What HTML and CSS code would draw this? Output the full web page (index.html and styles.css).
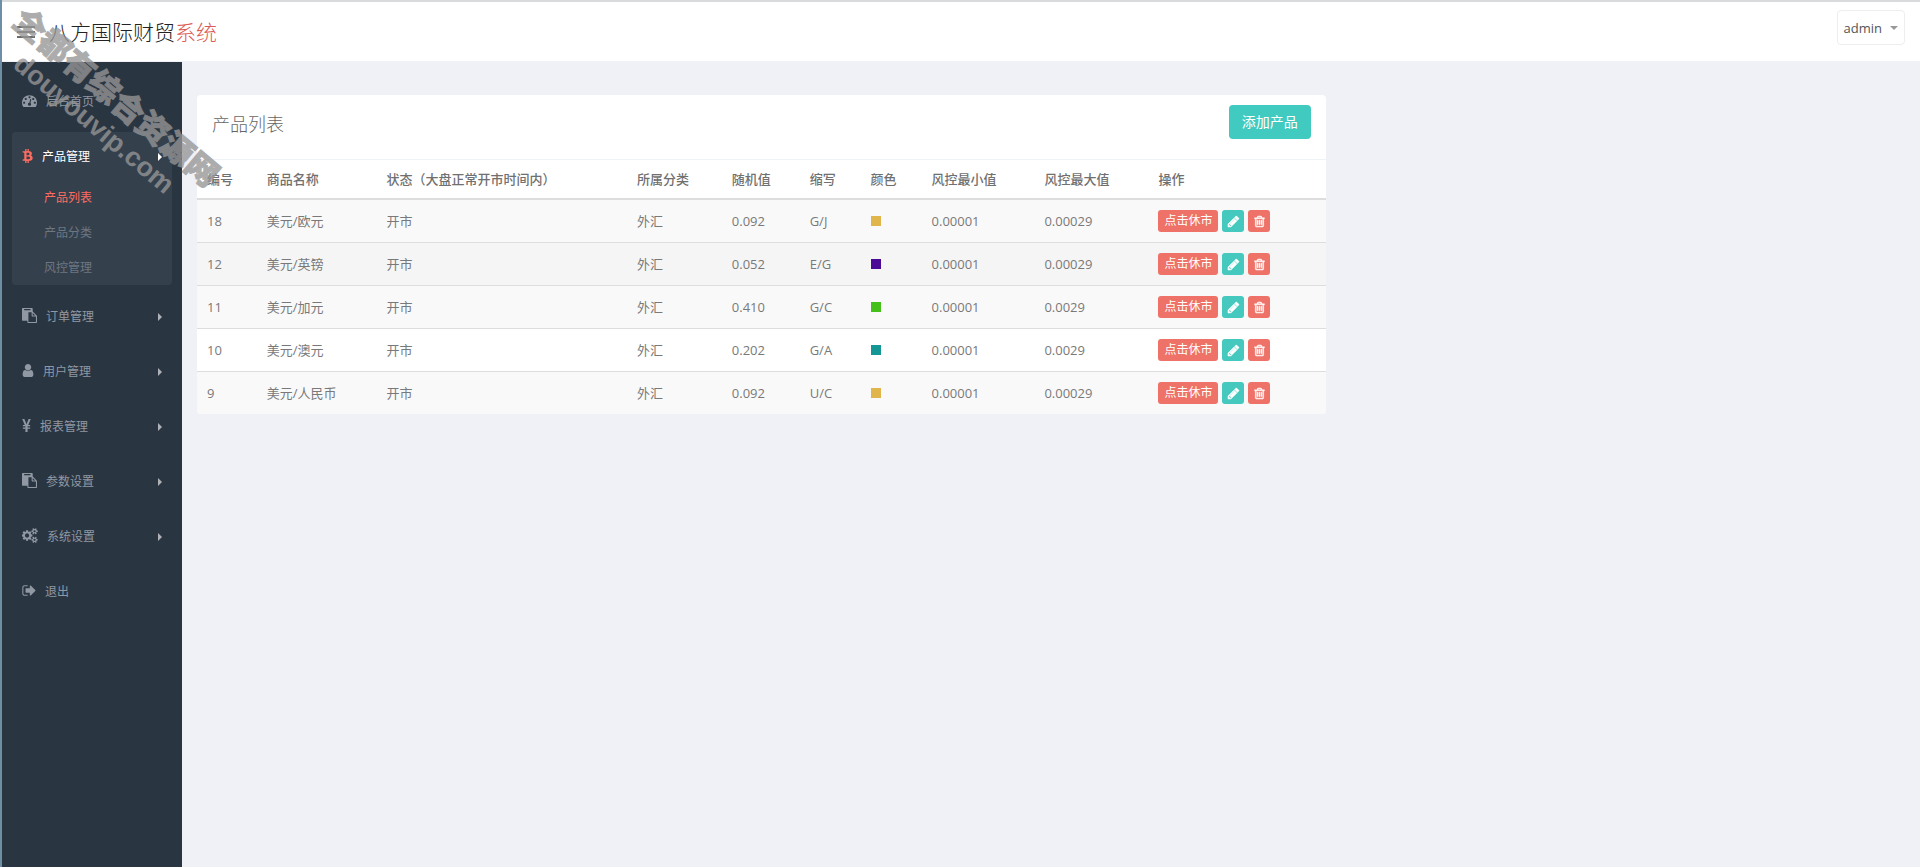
FILE: index.html
```html
<!DOCTYPE html>
<html lang="zh-CN">
<head>
<meta charset="utf-8">
<title>八方国际财贸系统</title>
<link rel="stylesheet" href="styles.css">
</head>
<body>
<svg class="sprite" aria-hidden="true">
  <symbol id="i-dash" viewBox="0 0 1792 1792"><path d="M384 1152q0-53-37.500-90.500t-90.500-37.500-90.500 37.500-37.500 90.500 37.500 90.500 90.500 37.500 90.500-37.500 37.500-90.500zm192-448q0-53-37.500-90.500t-90.500-37.500-90.500 37.500-37.500 90.500 37.500 90.500 90.500 37.500 90.500-37.500 37.500-90.500zm428 481l101-382q6-26-7.500-48.500t-38.500-29.500-48 6.500-30 39.500l-101 382q-60 5-107 43.500t-63 98.500q-20 77 20 146t117 89 146-20 89-117q16-60-6-117t-72-91zm660-33q0-53-37.500-90.500t-90.500-37.500-90.500 37.500-37.500 90.500 37.500 90.500 90.500 37.500 90.500-37.500 37.500-90.500zm-640-640q0-53-37.500-90.500t-90.500-37.500-90.500 37.500-37.500 90.500 37.500 90.500 90.500 37.500 90.500-37.500 37.500-90.500zm448 192q0-53-37.500-90.500t-90.500-37.500-90.500 37.500-37.500 90.500 37.500 90.500 90.500 37.500 90.500-37.500 37.500-90.500zm320 448q0 261-141 483-19 29-54 29h-1402q-35 0-54-29-141-221-141-483 0-182 71-348t191-286 286-191 348-71 348 71 286 191 191 286 71 348z"/></symbol>
  <symbol id="i-btc" viewBox="0 0 1280 1792"><path d="M1167 640q18 182-131 258 117 28 175 103t45 214q-7 71-32.500 125t-64.500 89-97 58.500-121.500 34.500-145.500 15v255h-154v-251q-80 0-122-1v252h-154v-255q-18 0-54-.5t-55-.5h-200l31-183h111q50 0 58-51v-402h16q-6-1-16-1v-287q-13-68-89-68h-111v-164l212 1q64 0 97-1v-252h154v247q82-2 122-2v-245h154v252q79 7 140 22.500t113 45 82.500 78 36.500 114.500zm-215 545q0-36-15-64t-37-46-57.500-30.500-65.500-18.500-74-9-69-3-64.500 1-47.500 1v338q8 0 37 .5t48 .5 53-1.500 58.500-4 57-8.500 55.500-14 47.500-21 39.500-30 24.500-40 9.500-51zm-71-476q0-33-12.500-58.500t-30.500-42-48-28-55-16.500-61.500-8-58-2.500-54 1-39.500.5v307q5 0 34.500.5t46.500 0 50-2 55-5.500 51.500-11 48.500-18.500 37-27 27-38.500 9-51z"/></symbol>
  <symbol id="i-paste" viewBox="0 0 1792 1792"><path d="M768 1664h896v-640h-416q-40 0-68-28t-28-68v-416h-384v1152zm256-1440v-64q0-13-9.500-22.500t-22.500-9.500h-704q-13 0-22.500 9.500t-9.500 22.500v64q0 13 9.500 22.500t22.500 9.500h704q13 0 22.500-9.500t9.500-22.500zm256 672h299l-299-299v299zm512 128v672q0 40-28 68t-68 28h-960q-40 0-68-28t-28-68v-160h-544q-40 0-68-28t-28-68v-1344q0-40 28-68t68-28h1088q40 0 68 28t28 68v328q21 13 36 28l408 408q28 28 48 76t20 88z"/></symbol>
  <symbol id="i-user" viewBox="256 0 1280 1792"><path d="M1536 1399q0 109-62.500 187t-150.500 78h-854q-88 0-150.500-78t-62.500-187q0-85 8.500-160.500t31.500-152 58.500-131 94-89 134.500-34.500q131 128 313 128t313-128q76 0 134.500 34.500t94 89 58.500 131 31.500 152 8.500 160.500zm-256-887q0 159-112.500 271.500t-271.500 112.500-271.500-112.500-112.500-271.500 112.500-271.500 271.500-112.500 271.500 112.500 112.500 271.500z"/></symbol>
  <symbol id="i-yen" viewBox="0 0 8 14"><path d="M0 1h2l2 4.800L6 1h2L5.600 6.500H7.400v1.200H5v1.100h2.400V10H5v3H3v-3H.6V8.800H3V7.700H.6V6.500h1.800z"/></symbol>
  <symbol id="i-cogs" viewBox="0 0 1856 1792"><path d="M832 896q0-106-75-181t-181-75-181 75-75 181 75 181 181 75 181-75 75-181zm768 512q0-52-38-90t-90-38-90 38-38 90q0 53 37.500 90.500t90.500 37.500 90.500-37.500 37.500-90.500zm0-1024q0-52-38-90t-90-38-90 38-38 90q0 53 37.500 90.500t90.500 37.500 90.500-37.500 37.500-90.500zm-384 421v185q0 10-7 19.500t-16 10.500l-155 24q-11 35-32 76 34 48 90 115 7 11 7 20 0 12-7 19-23 30-82.500 89.500t-78.500 59.500q-11 0-21-7l-115-90q-37 19-77 31-11 108-23 155-7 24-30 24h-186q-11 0-20-7.500t-10-17.500l-23-153q-34-10-75-31l-118 89q-7 7-20 7-11 0-21-8-144-133-144-160 0-9 7-19 10-14 41-53t47-61q-23-44-35-82l-152-24q-10-1-17-9.500t-7-19.500v-185q0-10 7-19.500t16-10.500l155-24q11-35 32-76-34-48-90-115-7-11-7-20 0-12 7-20 22-30 82-89t79-59q11 0 21 7l115 90q34-18 77-32 11-108 23-154 7-24 30-24h186q11 0 20 7.500t10 17.500l23 153q34 10 75 31l118-89q8-7 20-7 11 0 21 8 144 133 144 160 0 8-7 19-12 16-42 54t-45 60q23 48 34 82l152 23q10 2 17 10.500t7 19.500zm640 533v140q0 16-149 31-12 27-30 52 51 113 51 138 0 4-4 7-122 71-124 71-8 0-46-47t-52-68q-20 2-30 2t-30-2q-14 21-52 68t-46 47q-2 0-124-71-4-3-4-7 0-25 51-138-18-25-30-52-149-15-149-31v-140q0-16 149-31 13-29 30-52-51-113-51-138 0-4 4-7 4-2 35-20t59-34 30-16q8 0 46 46.500t52 67.500q20-2 30-2t30 2q51-71 92-112l6-2q4 0 124 70 4 3 4 7 0 25-51 138 17 23 30 52 149 15 149 31zm0-1024v140q0 16-149 31-12 27-30 52 51 113 51 138 0 4-4 7-122 71-124 71-8 0-46-47t-52-68q-20 2-30 2t-30-2q-14 21-52 68t-46 47q-2 0-124-71-4-3-4-7 0-25 51-138-18-25-30-52-149-15-149-31v-140q0-16 149-31 13-29 30-52-51-113-51-138 0-4 4-7 4-2 35-20t59-34 30-16q8 0 46 46.500t52 67.500q20-2 30-2t30 2q51-71 92-112l6-2q4 0 124 70 4 3 4 7 0 25-51 138 17 23 30 52 149 15 149 31z"/></symbol>
  <symbol id="i-out" viewBox="64 0 1600 1792"><path d="M704 1440q0 4 1 20t.5 26.500-3 23.500-10 19.500-20.500 6.500h-320q-119 0-203.500-84.500t-84.500-203.500v-704q0-119 84.500-203.500t203.500-84.500h320q13 0 22.500 9.500t9.500 22.500q0 4 1 20t.5 26.500-3 23.500-10 19.500-20.500 6.500h-320q-66 0-113 47t-47 113v704q0 66 47 113t113 47h312l11.500 1 11.500 3 8 5.500 7 9 2 13.500zm928-544q0 26-19 45l-544 544q-19 19-45 19t-45-19-19-45v-288h-448q-26 0-45-19t-19-45v-384q0-26 19-45t45-19h448v-288q0-26 19-45t45-19 45 19l544 544q19 19 19 45z"/></symbol>
  <symbol id="i-pencil" viewBox="0 0 1792 1792"><path d="M491 1536l91-91-235-235-91 91v107h128v128h107zm523-928q0-22-22-22-10 0-17 7l-542 542q-7 7-7 17 0 22 22 22 10 0 17-7l542-542q7-7 7-17zm-54-192l416 416-832 832h-416v-416zm683 96q0 53-37 90l-166 166-416-416 166-165q36-38 90-38 53 0 91 38l235 234q37 39 37 91z"/></symbol>
  <symbol id="i-trash" viewBox="0 0 1792 1792"><path d="M704 736v576q0 14-9 23t-23 9h-64q-14 0-23-9t-9-23v-576q0-14 9-23t23-9h64q14 0 23 9t9 23zm256 0v576q0 14-9 23t-23 9h-64q-14 0-23-9t-9-23v-576q0-14 9-23t23-9h64q14 0 23 9t9 23zm256 0v576q0 14-9 23t-23 9h-64q-14 0-23-9t-9-23v-576q0-14 9-23t23-9h64q14 0 23 9t9 23zm128 724v-948h-896v948q0 22 7 40.500t14.500 27 10.500 8.500h832q3 0 10.500-8.500t14.500-27 7-40.500zm-672-1076h448l-48-117q-7-9-17-11h-317q-10 2-17 11zm928 32v64q0 14-9 23t-23 9h-96v948q0 83-47 143.500t-113 60.500h-832q-66 0-113-58.500t-47-141.500v-952h-96q-14 0-23-9t-9-23v-64q0-14 9-23t23-9h309l70-167q15-37 54-63t79-26h320q40 0 79 26t54 63l70 167h309q14 0 23 9t9 23z"/></symbol>
</svg>

<header class="topbar">
  <button class="toggle" type="button" aria-label="菜单"><span></span><span></span><span></span></button>
  <a class="logo" href="#">八方国际财贸<span>系统</span></a>
  <button class="account" type="button">admin<i class="caret"></i></button>
</header>

<div class="layout">
  <nav class="sidebar">
    <ul class="menu">
      <li><a href="#"><svg class="w15"><use href="#i-dash"/></svg>后台首页</a></li>
      <li class="active">
        <a href="#"><svg class="w11"><use href="#i-btc"/></svg>产品管理<i class="arrow"></i></a>
        <ul class="submenu">
          <li><a class="current" href="#">产品列表</a></li>
          <li><a href="#">产品分类</a></li>
          <li><a href="#">风控管理</a></li>
        </ul>
      </li>
      <li><a href="#"><svg class="w15"><use href="#i-paste"/></svg>订单管理<i class="arrow"></i></a></li>
      <li><a href="#"><svg class="w12"><use href="#i-user"/></svg>用户管理<i class="arrow"></i></a></li>
      <li><a href="#"><svg class="w9"><use href="#i-yen"/></svg>报表管理<i class="arrow"></i></a></li>
      <li><a href="#"><svg class="w15"><use href="#i-paste"/></svg>参数设置<i class="arrow"></i></a></li>
      <li><a href="#"><svg class="w16"><use href="#i-cogs"/></svg>系统设置<i class="arrow"></i></a></li>
      <li><a href="#"><svg class="w14"><use href="#i-out"/></svg>退出</a></li>
    </ul>
  </nav>

  <main class="content">
    <section class="panel">
      <div class="panel-head">
        <h1>产品列表</h1>
        <button class="btn-add" type="button">添加产品</button>
      </div>
      <table class="grid">
        <colgroup><col class="c-id"><col class="c-name"><col class="c-state"><col class="c-type"><col class="c-rand"><col class="c-abbr"><col class="c-color"><col class="c-min"><col class="c-max"><col></colgroup>
        <thead>
          <tr><th>编号</th><th>商品名称</th><th>状态<span class="paren">（</span>大盘正常开市时间内<span class="paren">）</span></th><th>所属分类</th><th>随机值</th><th>缩写</th><th>颜色</th><th>风控最小值</th><th>风控最大值</th><th>操作</th></tr>
        </thead>
        <tbody>
          <tr><td>18</td><td>美元/欧元</td><td>开市</td><td>外汇</td><td>0.092</td><td>G/J</td><td><i class="swatch gold"></i></td><td>0.00001</td><td>0.00029</td><td><div class="ops"><button class="op red" type="button">点击休市</button><button class="op icon teal" type="button" aria-label="编辑"><svg><use href="#i-pencil"/></svg></button><button class="op icon red" type="button" aria-label="删除"><svg><use href="#i-trash"/></svg></button></div></td></tr>
          <tr class="hovered"><td>12</td><td>美元/英镑</td><td>开市</td><td>外汇</td><td>0.052</td><td>E/G</td><td><i class="swatch purple"></i></td><td>0.00001</td><td>0.00029</td><td><div class="ops"><button class="op red" type="button">点击休市</button><button class="op icon teal" type="button" aria-label="编辑"><svg><use href="#i-pencil"/></svg></button><button class="op icon red" type="button" aria-label="删除"><svg><use href="#i-trash"/></svg></button></div></td></tr>
          <tr><td>11</td><td>美元/加元</td><td>开市</td><td>外汇</td><td>0.410</td><td>G/C</td><td><i class="swatch green"></i></td><td>0.00001</td><td>0.0029</td><td><div class="ops"><button class="op red" type="button">点击休市</button><button class="op icon teal" type="button" aria-label="编辑"><svg><use href="#i-pencil"/></svg></button><button class="op icon red" type="button" aria-label="删除"><svg><use href="#i-trash"/></svg></button></div></td></tr>
          <tr><td>10</td><td>美元/澳元</td><td>开市</td><td>外汇</td><td>0.202</td><td>G/A</td><td><i class="swatch cyan"></i></td><td>0.00001</td><td>0.0029</td><td><div class="ops"><button class="op red" type="button">点击休市</button><button class="op icon teal" type="button" aria-label="编辑"><svg><use href="#i-pencil"/></svg></button><button class="op icon red" type="button" aria-label="删除"><svg><use href="#i-trash"/></svg></button></div></td></tr>
          <tr><td>9</td><td>美元/人民币</td><td>开市</td><td>外汇</td><td>0.092</td><td>U/C</td><td><i class="swatch gold"></i></td><td>0.00001</td><td>0.00029</td><td><div class="ops"><button class="op red" type="button">点击休市</button><button class="op icon teal" type="button" aria-label="编辑"><svg><use href="#i-pencil"/></svg></button><button class="op icon red" type="button" aria-label="删除"><svg><use href="#i-trash"/></svg></button></div></td></tr>
        </tbody>
      </table>
    </section>
  </main>
</div>

<div class="watermark"><span class="wm-name">全都有综合资源网</span><span class="wm-site">douyouvip.com</span></div>
</body>
</html>
```
FILE: styles.css
```css
* { box-sizing: border-box; }

body {
  display: flex;
  flex-direction: column;
  min-height: 100vh;
  margin: 0;
  border-left: 2px solid #6d8ea4;
  background: #f0f1f7;
  color: #797979;
  font: 13px/20px "Open Sans", "Noto Sans CJK SC", sans-serif;
}

ul { margin: 0; padding: 0; list-style: none; }
a { color: inherit; text-decoration: none; }
button { font: inherit; cursor: pointer; }
svg { display: block; fill: currentColor; }
.sprite { position: absolute; width: 0; height: 0; }

.topbar {
  display: flex;
  align-items: center;
  height: 62px;
  padding: 0 15px;
  border-top: 2px solid #d8dadc;
  border-bottom: 1px solid #f1f2f7;
  background: #fff;
}
.toggle {
  display: flex;
  flex-direction: column;
  gap: 3px;
  width: 18px;
  padding: 0;
  border: 0;
  background: none;
}
.toggle span { height: 2px; background: #6b6b6b; }
.logo {
  margin-left: 14px;
  color: #222;
  font-size: 21px;
  font-weight: 300;
  line-height: 30px;
}
.logo span { color: #dc5a54; }
.account {
  display: flex;
  align-items: center;
  gap: 8px;
  height: 35px;
  margin: 0 0 8px auto;
  padding: 0 6px;
  border: 1px solid #eee;
  border-radius: 4px;
  background: #fff;
  color: #555;
}
.caret {
  border: 4px solid transparent;
  border-top-color: #999;
  border-bottom: 0;
}

.layout { display: flex; flex: 1; }

.sidebar {
  flex: none;
  width: 180px;
  padding: 15px 10px;
  background: #2a3542;
  color: #8f98a3;
  font-size: 12px;
}
.menu { display: flex; flex-direction: column; gap: 7px; }
.menu > li > a {
  display: flex;
  align-items: center;
  height: 48px;
  padding: 2px 10px 0;
}
.menu svg { height: 15px; margin: 0 9px 3px 0; }
.w9 { width: 9px; }
.w11 { width: 11px; }
.w12 { width: 12px; }
.w14 { width: 14px; }
.w15 { width: 15px; }
.w16 { width: 16px; }
.arrow {
  margin-left: auto;
  border: 4px solid transparent;
  border-left-color: #aeb2b7;
  border-right: 0;
}
.active { border-radius: 4px; background: #35404d; }
.active > a { color: #fff; }
.active > a svg { color: #ff6c60; }
.active .arrow { border-left-color: #fff; }
.submenu a {
  display: block;
  padding-left: 32px;
  color: #6d7782;
  line-height: 35px;
}
.submenu .current { color: #ff6c60; }

.content { flex: 1; padding: 33px 15px; }
.panel {
  width: calc((100% + 30px) * 2 / 3 - 30px);
  min-width: 900px;
  overflow: hidden;
  border-radius: 4px;
  background: #fff;
}
.panel-head {
  display: flex;
  align-items: flex-start;
  justify-content: space-between;
  padding: 10px 15px 16px;
  border-bottom: 1px solid #eff2f7;
}
.panel-head h1 {
  margin: 0;
  color: #666;
  font-size: 18px;
  font-weight: 300;
  line-height: 38px;
}
.btn-add {
  height: 34px;
  padding: 0 13px;
  border: 0;
  border-radius: 4px;
  background: #41cac0;
  color: #fff;
  font-size: 14px;
}

.grid { width: 100%; border-collapse: separate; border-spacing: 0; table-layout: fixed; }
.c-id { width: 5.3%; }
.c-name { width: 10.6%; }
.c-state { width: 22.2%; }
.c-type { width: 8.4%; }
.c-rand { width: 6.9%; }
.c-abbr, .c-color { width: 5.4%; }
.c-min { width: 10%; }
.c-max { width: 10.1%; }
.grid th {
  height: 40px;
  padding: 0 10px;
  border-bottom: 2px solid #ddd;
  color: #707070;
  font-weight: 500;
  text-align: left;
}
.paren { font-family: "Noto Sans CJK TC", sans-serif; }
.grid td { height: 43px; padding: 0 10px; border-bottom: 1px solid #ddd; }
.grid tbody tr:nth-child(odd) { background: #f9f9f9; }
.grid tbody tr.hovered { background: #f5f5f5; }
.grid tbody tr:last-child td { height: 42px; border-bottom: 0; }
.swatch { display: block; width: 10px; height: 10px; }
.gold { background: #e0b54c; }
.purple { background: #4b0b96; }
.green { background: #45c01a; }
.cyan { background: #149694; }

.ops { display: flex; gap: 4px; }
.op {
  display: flex;
  align-items: center;
  justify-content: center;
  height: 22px;
  padding: 0 6px;
  border: 0;
  border-radius: 3px;
  color: #fff;
  font-size: 12px;
}
.icon { width: 22px; padding: 0; }
.op svg { width: 13px; height: 13px; stroke: currentColor; stroke-width: 60; }
.red { background: #ee7268; }
.teal { background: #45c8be; }

.watermark {
  position: absolute;
  top: 77px;
  left: -30px;
  display: flex;
  flex-direction: column;
  align-items: center;
  width: 270px;
  color: #969696;
  font: 900 32px/34px "Liberation Sans", "Noto Sans CJK SC", sans-serif;
  white-space: nowrap;
  opacity: .78;
  pointer-events: none;
  transform: rotate(40deg);
}
.wm-name { -webkit-text-stroke: 1px #969696; }
.wm-site { font-size: 27px; }
```
